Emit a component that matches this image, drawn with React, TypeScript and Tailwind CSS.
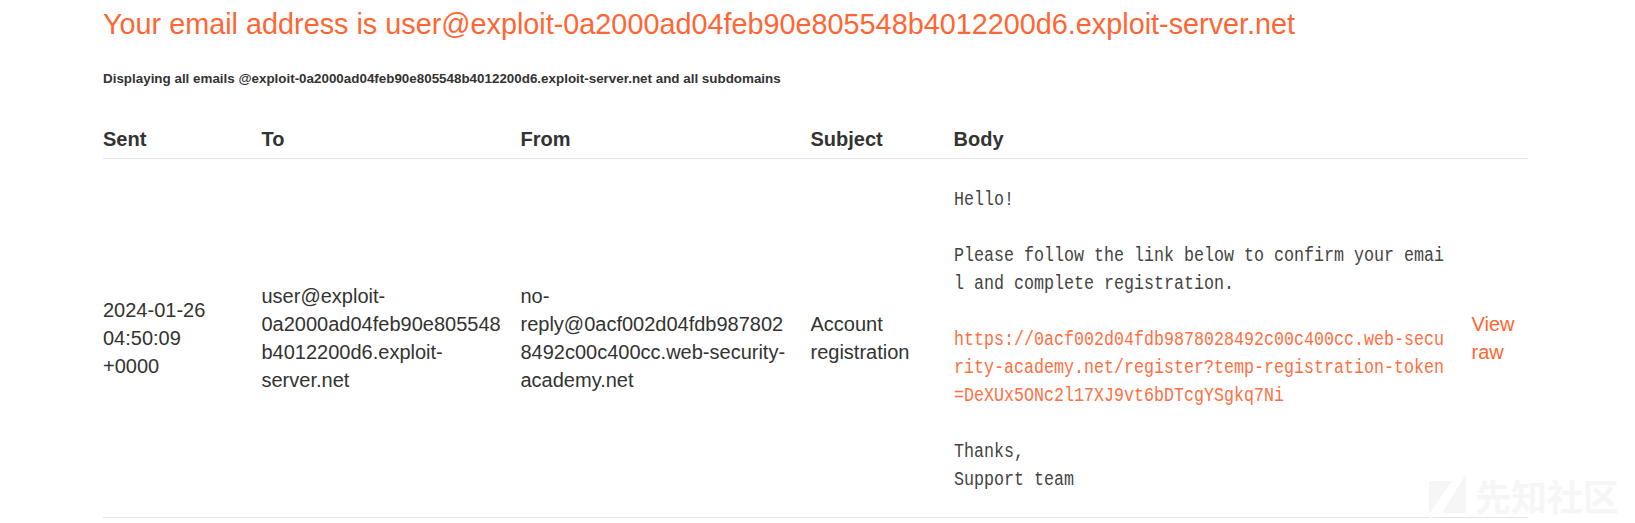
const headings = ["Sent", "To", "From", "Subject", "Body", ""];

function MessageBody() {
  return (
    <div className="h-[330px] w-[490px]">
      <div className="w-[588px] origin-top-left scale-x-[0.8331] whitespace-pre font-['Liberation_Mono',monospace] text-[20px] leading-[28px] text-[#444443]">
        <p>Hello!</p>
        <p>{" "}</p>
        <p>Please follow the link below to confirm your emai</p>
        <p>l and complete registration.</p>
        <p>{" "}</p>
        <a className="block text-[#ff6f42]">
          <span className="block">https://0acf002d04fdb9878028492c00c400cc.web-secu</span>
          <span className="block">rity-academy.net/register?temp-registration-token</span>
          <span className="block">=DeXUx5ONc2l17XJ9vt6bDTcgYSgkq7Ni</span>
        </a>
        <p>{" "}</p>
        <p>Thanks,</p>
        <p>Support team</p>
      </div>
    </div>
  );
}

function Watermark() {
  return (
    <div className="absolute left-[1429px] top-[472px] flex h-[51px] text-[#f6f6f6]">
      <svg width="38" height="51" viewBox="0 0 38 51" fill="currentColor">
        <path d="M0 9H23L0 42ZM37 2V41H13Z" />
        <path d="M0 42L1 46L3 43V47H0Z" fill="#fff" />
      </svg>
      <span className="ml-[8px] whitespace-nowrap font-['Noto_Sans_CJK_SC',sans-serif] text-[36px] font-bold leading-[47px]">先知社区</span>
    </div>
  );
}

export default function App() {
  return (
    <main className="relative h-[523px] w-[1635px] overflow-hidden bg-white pl-[103px] font-['Liberation_Sans',Arial,sans-serif] text-[#333332]">
      <h1 className="whitespace-nowrap pt-[4px] text-[28.8px] leading-[40px] text-[#ff6633]">
        Your email address is user@exploit-0a2000ad04feb90e805548b4012200d6.exploit-server.net
      </h1>
      <h5 className="mt-[26px] whitespace-nowrap text-[13.4px] font-bold leading-[18px]">
        Displaying all emails @exploit-0a2000ad04feb90e805548b4012200d6.exploit-server.net and all subdomains
      </h5>
      <table className="mt-[29px] w-[1425px] table-fixed border-collapse text-left text-[20px] leading-[28px]">
        <colgroup>
          <col className="w-[158.5px]" />
          <col className="w-[259px]" />
          <col className="w-[290px]" />
          <col className="w-[143px]" />
          <col className="w-[518px]" />
          <col />
        </colgroup>
        <thead>
          <tr className="h-[41px] border-b border-[#e4e4e4]">
            {headings.map((heading) => (
              <th key={heading} className="p-0 pb-[5px] align-bottom font-bold">{heading}</th>
            ))}
          </tr>
        </thead>
        <tbody>
          <tr className="h-[359px] border-b border-[#e4e4e4]">
            <td className="p-0">2024-01-26<br />04:50:09<br />+0000</td>
            <td className="whitespace-nowrap p-0">user@exploit-<br />0a2000ad04feb90e805548<br />b4012200d6.exploit-<br />server.net</td>
            <td className="whitespace-nowrap p-0">no-<br />reply@0acf002d04fdb987802<br />8492c00c400cc.web-security-<br />academy.net</td>
            <td className="p-0">Account<br />registration</td>
            <td className="p-0 align-top"><div className="pt-[27px]"><MessageBody /></div></td>
            <td className="p-0 text-[#ff6633]"><a>View<br />raw</a></td>
          </tr>
        </tbody>
      </table>
      <Watermark />
    </main>
  );
}
